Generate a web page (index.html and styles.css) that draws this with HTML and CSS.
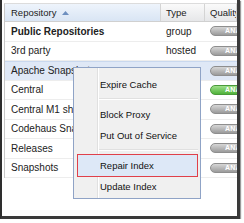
FILE: index.html
```html
<!DOCTYPE html>
<html lang="en">
<head>
    <meta charset="UTF-8">
    <title>Repositories</title>
    <link rel="stylesheet" href="styles.css">
</head>
<body>
    <div class="shot">
        <div class="panel">
            <div class="row head">
                <div class="cell sorted">Repository
                    <svg class="arrow" width="7" height="4" viewBox="0 0 7 4"><polygon points="0,4 3.5,0 7,4" fill="#6d8fbf"/></svg>
                </div>
                <div class="cell">Type</div>
                <div class="cell">Quality</div>
            </div>
            <div class="row">
                <div class="cell bold">Public Repositories</div>
                <div class="cell">group</div>
                <div class="cell"><span class="pill">ANALYZE</span></div>
            </div>
            <div class="row">
                <div class="cell">3rd party</div>
                <div class="cell">hosted</div>
                <div class="cell"><span class="pill">ANALYZE</span></div>
            </div>
            <div class="row selected">
                <div class="cell">Apache Snapshots</div>
                <div class="cell">proxy</div>
                <div class="cell"><span class="pill">ANALYZE</span></div>
            </div>
            <div class="row">
                <div class="cell">Central</div>
                <div class="cell">proxy</div>
                <div class="cell"><span class="pill green">ANALYZE</span></div>
            </div>
            <div class="row">
                <div class="cell">Central M1 shadow</div>
                <div class="cell">virtual</div>
                <div class="cell"><span class="pill">ANALYZE</span></div>
            </div>
            <div class="row">
                <div class="cell">Codehaus Snapshots</div>
                <div class="cell">proxy</div>
                <div class="cell"><span class="pill">ANALYZE</span></div>
            </div>
            <div class="row">
                <div class="cell">Releases</div>
                <div class="cell">hosted</div>
                <div class="cell"><span class="pill">ANALYZE</span></div>
            </div>
            <div class="row">
                <div class="cell">Snapshots</div>
                <div class="cell">hosted</div>
                <div class="cell"><span class="pill">ANALYZE</span></div>
            </div>
        </div>

        <!-- context menu sits over the grid -->
        <div class="menu">
            <div class="item">Expire Cache</div>
            <div class="sep"></div>
            <div class="item">Block Proxy</div>
            <div class="item">Put Out of Service</div>
            <div class="sep"></div>
            <div class="item active">Repair Index</div>
            <div class="item">Update Index</div>
        </div>
    </div>
</body>
</html>
```

FILE: styles.css
```css
body {
    margin: 0;
    background: #fff;
    font-family: "Liberation Sans", Arial, sans-serif;
    color: #222;
}
.shot {
    position: relative;
    width: 235px;
    height: 216px;
    border-left: 2px solid #2e2e2e;
    border-right: 3px solid #3a3a3a;
    border-bottom: 3px solid #3a3a3a;
    box-shadow: 1px 1px 1px #9a9a9a;
    background: #fff;
    overflow: hidden;
}
.panel {
    margin-top: 3px;
    border-top: 1px solid #dcdcdc;
    border-left: 1px solid #c8c8c8;
    margin-left: 2px;
}
.row {
    display: grid;
    grid-template-columns: 156px 44px 1fr;
    height: 19.5px;
    box-sizing: border-box;
    border-bottom: 1px solid #ededed;
    font-size: 10px;
    white-space: nowrap;
}
.cell {
    display: flex;
    align-items: center;
    overflow: hidden;
    padding-left: 5px;
}
.row .cell:first-child {
    padding-left: 6px;
}
.head {
    height: 18px;
    background: linear-gradient(#fafafa, #e6e7e9);
    border-bottom: 1px solid #d0d0d0;
    font-size: 9.5px;
}
.head .cell {
    border-right: 1px solid #d4d4d4;
}
.head .sorted {
    background: linear-gradient(#eef4fc, #d9e5f4);
}
.arrow {
    margin-left: 6px;
}
.bold {
    font-weight: bold;
}
.selected {
    background: #dfe8f6;
    border-top: 1px solid #c9d8ee;
}
.pill {
    display: inline-block;
    width: 40px;
    height: 8px;
    line-height: 8px;
    border-radius: 5px;
    border: 1px solid #8e8e8e;
    background: linear-gradient(#d6d6d6, #9b9b9b);
    color: #fff;
    font-size: 7px;
    font-weight: bold;
    padding-left: 14px;
    letter-spacing: 0.2px;
}
.pill.green {
    border-color: #4a9a3a;
    background: linear-gradient(#9fe08a, #4fb23a);
}
.menu {
    position: absolute;
    left: 71px;
    top: 67px;
    width: 126px;
    padding: 6px 0 1px;
    background: #f0f0f0;
    border: 1px solid #8fa3c6;
    font-size: 9.5px;
    color: #111;
}
.menu::before {
    content: "";
    position: absolute;
    top: 0;
    bottom: 0;
    left: 23px;
    width: 1px;
    background: #e0e0e0;
    border-right: 1px solid #fff;
}
.item {
    position: relative;
    height: 21px;
    line-height: 21px;
    padding-left: 26px;
}
.menu .active {
    margin: -1px 2px -1px 3px;
    padding-left: 22px;
    background: #dde8f7;
    border: 1px solid #e0404a;
}
.sep {
    position: relative;
    height: 1px;
    margin: 3px 2px 4px 25px;
    background: #e0e0e0;
    border-bottom: 1px solid #fff;
}
```
